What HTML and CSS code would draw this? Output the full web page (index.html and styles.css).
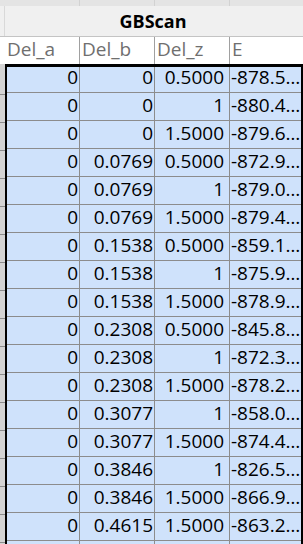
FILE: index.html
```html
<!DOCTYPE html>
<html>
<head>
<meta charset="utf-8">
<link rel="stylesheet" href="styles.css">
</head>
<body>
<div class="view">
  <div class="strip">
    <div class="sc c1"></div><div class="sc c2"></div><div class="sc c3"></div><div class="sc c4"></div>
  </div>
  <div class="title"><div class="tgutter"></div><div class="tname">GBScan</div></div>
  <div class="head">
    <div class="hc c1">Del_a</div><div class="hc c2">Del_b</div><div class="hc c3">Del_z</div><div class="hc c4">E</div>
  </div>
  <div class="body">
    <div class="gutter"></div>
    <div class="table">
      <div class="row"><div class="d a">0</div><div class="d b">0</div><div class="d z">0.5000</div><div class="d e">-878.5…</div></div>
      <div class="row"><div class="d a">0</div><div class="d b">0</div><div class="d z">1</div><div class="d e">-880.4…</div></div>
      <div class="row"><div class="d a">0</div><div class="d b">0</div><div class="d z">1.5000</div><div class="d e">-879.6…</div></div>
      <div class="row"><div class="d a">0</div><div class="d b">0.0769</div><div class="d z">0.5000</div><div class="d e">-872.9…</div></div>
      <div class="row"><div class="d a">0</div><div class="d b">0.0769</div><div class="d z">1</div><div class="d e">-879.0…</div></div>
      <div class="row"><div class="d a">0</div><div class="d b">0.0769</div><div class="d z">1.5000</div><div class="d e">-879.4…</div></div>
      <div class="row"><div class="d a">0</div><div class="d b">0.1538</div><div class="d z">0.5000</div><div class="d e">-859.1…</div></div>
      <div class="row"><div class="d a">0</div><div class="d b">0.1538</div><div class="d z">1</div><div class="d e">-875.9…</div></div>
      <div class="row"><div class="d a">0</div><div class="d b">0.1538</div><div class="d z">1.5000</div><div class="d e">-878.9…</div></div>
      <div class="row"><div class="d a">0</div><div class="d b">0.2308</div><div class="d z">0.5000</div><div class="d e">-845.8…</div></div>
      <div class="row"><div class="d a">0</div><div class="d b">0.2308</div><div class="d z">1</div><div class="d e">-872.3…</div></div>
      <div class="row"><div class="d a">0</div><div class="d b">0.2308</div><div class="d z">1.5000</div><div class="d e">-878.2…</div></div>
      <div class="row"><div class="d a">0</div><div class="d b">0.3077</div><div class="d z">1</div><div class="d e">-858.0…</div></div>
      <div class="row"><div class="d a">0</div><div class="d b">0.3077</div><div class="d z">1.5000</div><div class="d e">-874.4…</div></div>
      <div class="row"><div class="d a">0</div><div class="d b">0.3846</div><div class="d z">1</div><div class="d e">-826.5…</div></div>
      <div class="row"><div class="d a">0</div><div class="d b">0.3846</div><div class="d z">1.5000</div><div class="d e">-866.9…</div></div>
      <div class="row"><div class="d a">0</div><div class="d b">0.4615</div><div class="d z">1.5000</div><div class="d e">-863.2…</div></div>
      <div class="row"><div class="d a"></div><div class="d b"></div><div class="d z"></div><div class="d e"></div></div>
    </div>
  </div>
</div>
</body>
</html>
```
FILE: styles.css
```css
html, body {
  margin: 0;
  padding: 0;
  width: 303px;
  height: 544px;
  overflow: hidden;
  background: #ffffff;
}
.view {
  width: 303px;
  height: 544px;
  overflow: hidden;
  font-family: "Open Sans", "Noto Sans", sans-serif;
}
.strip {
  display: grid;
  grid-template-columns: 80px 75px 75px 73px;
  height: 6px;
  background: #e4e4e4;
}
.sc { border-right: 1px solid #d2d2d2; }
.sc.c4 { border-right: none; }
.title {
  display: flex;
  height: 30px;
  background: #f0f0f0;
  border-bottom: 1px solid #c4c4c4;
}
.tgutter {
  width: 4px;
  border-right: 1px solid #d9d9d9;
}
.tname {
  flex: 1;
  text-align: center;
  font-weight: 700;
  font-size: 18px;
  line-height: 30px;
  color: #000;
  padding-right: 2px;
}
.head {
  display: grid;
  grid-template-columns: 80px 75px 75px 73px;
  height: 27px;
  background: #fff;
}
.hc {
  border-right: 1px solid #a0a0a0;
  font-size: 19px;
  line-height: 21px;
  padding: 2px 0 0 2px;
  color: #6f6f6f;
  white-space: nowrap;
}
.hc.c1 { padding-left: 7px; }
.hc.c4 { border-right: none; }
.body {
  display: flex;
}
.gutter {
  width: 5px;
  background: #d3d3d3;
  background-image: repeating-linear-gradient(to bottom, transparent 0, transparent 27px, #8c8c8c 27px, #8c8c8c 28px);
  border-top: 3px solid #d3d3d3;
}
.table {
  flex: 1;
  border-top: 3px solid #000;
  border-left: 2px solid #000;
  border-right: 2px solid #000;
  background: #cfe2fb;
}
.row {
  display: grid;
  grid-template-columns: 73px 75px 75px 71px;
  height: 27px;
  border-bottom: 1px solid #8c8c8c;
}
.row:first-child {
  height: 25px;
}
.d {
  font-size: 19px;
  line-height: 24px;
  color: #000;
  border-right: 1px solid #8c8c8c;
  white-space: nowrap;
}
.row:first-child .d { line-height: 21px; }
.d.a, .d.b { text-align: right; padding-right: 1px; }
.d.z { text-align: right; padding-right: 5px; }
.d.e { text-align: left; padding-left: 1px; border-right: none; }
```
